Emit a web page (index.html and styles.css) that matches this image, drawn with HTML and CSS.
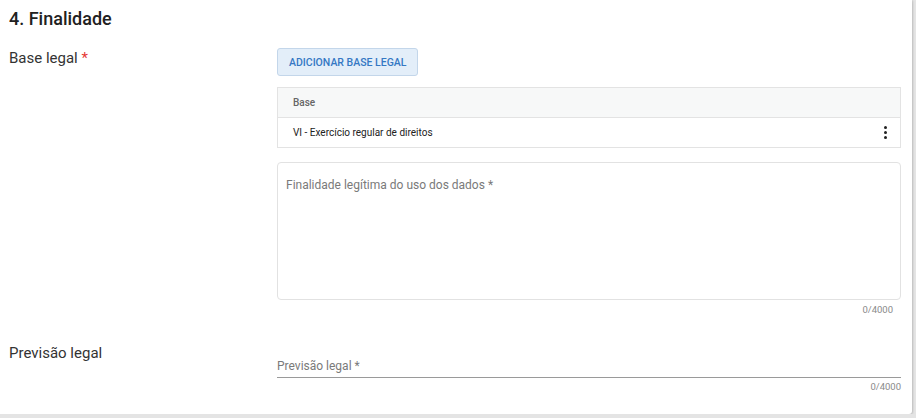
FILE: index.html
```html
<!DOCTYPE html>
<html>

<head>
    <meta charset="UTF-8">
    <link rel="stylesheet" href="styles.css">
    <title>Finalidade</title>
</head>

<body>
    <div class="card">
        <h2 class="section-title">4. Finalidade</h2>

        <div class="form-row">
            <div class="form-label">Base legal <span class="req">*</span></div>
            <div class="form-field">
                <button class="btn-add" type="button">Adicionar base legal</button>

                <div class="base-table">
                    <div class="base-head">Base</div>
                    <div class="base-row">
                        <span>VI - Exercício regular de direitos</span>
                        <span class="kebab"><i></i><i></i><i></i></span>
                    </div>
                </div>

                <div class="text-box">
                    <span class="placeholder">Finalidade legítima do uso dos dados *</span>
                </div>
                <div class="counter">0/4000</div>
            </div>
        </div>

        <div class="form-row row-previsao">
            <div class="form-label">Previsão legal</div>
            <div class="form-field">
                <div class="line-input">
                    <span class="placeholder">Previsão legal *</span>
                </div>
                <div class="counter counter-line">0/4000</div>
            </div>
        </div>
    </div>
</body>

</html>
```

FILE: styles.css
```css
body {
    margin: 0;
    background: #e4e4e4;
    font-family: Roboto, "Noto Sans", Arial, sans-serif;
    color: #212121;
}

.card {
    width: 912px;
    height: 414px;
    box-sizing: border-box;
    background: #fff;
    padding: 0 11px 0 9px;
    box-shadow: 0 1px 3px rgba(0, 0, 0, 0.2), 1px 0 2px rgba(0, 0, 0, 0.08);
    border-radius: 0 0 3px 0;
}

.section-title {
    margin: 0;
    padding: 8px 0 0 0;
    height: 30px;
    font-size: 18px;
    font-weight: 500;
    line-height: 22px;
    color: #212121;
}

.form-row {
    display: flex;
    padding-top: 10px;
}

.form-label {
    width: 268px;
    flex: none;
    font-size: 15px;
    line-height: 20px;
    color: #333;
}

.req {
    color: #e53935;
}

.form-field {
    flex: 1;
}

.btn-add {
    height: 28px;
    padding: 0 11px;
    background: #e3eef9;
    border: 1px solid #c3d6ea;
    border-radius: 3px;
    color: #3578c4;
    font-family: Roboto, Arial, sans-serif;
    font-size: 10.5px;
    font-weight: 500;
    text-transform: uppercase;
}

.base-table {
    margin-top: 11px;
    border: 1px solid #e3e3e3;
    font-size: 10px;
}

.base-head {
    height: 29px;
    line-height: 29px;
    padding-left: 15px;
    background: #f7f8f8;
    border-bottom: 1px solid #e3e3e3;
    color: #666;
    font-weight: 500;
}

.base-row {
    height: 29px;
    display: flex;
    align-items: center;
    justify-content: space-between;
    padding: 0 13px 0 15px;
    color: #222;
}

.kebab {
    display: flex;
    flex-direction: column;
    gap: 2px;
}

.kebab i {
    display: block;
    width: 3px;
    height: 3px;
    border-radius: 50%;
    background: #222;
}

.text-box {
    margin-top: 14px;
    height: 138px;
    box-sizing: border-box;
    border: 1px solid #e2e2e2;
    border-radius: 4px;
    padding: 11px 8px;
}

.placeholder {
    font-size: 12px;
    color: #7a7a7a;
}

.counter {
    text-align: right;
    font-size: 9.5px;
    color: #8a8a8a;
    padding: 4px 8px 0 0;
}

.row-previsao {
    padding-top: 24px;
}

.row-previsao .form-label {
    padding-top: 4px;
}

.line-input {
    margin-top: 16px;
    height: 22px;
    border-bottom: 1px solid #9a9a9a;
}

.counter-line {
    padding: 3px 0 0 0;
}
```
